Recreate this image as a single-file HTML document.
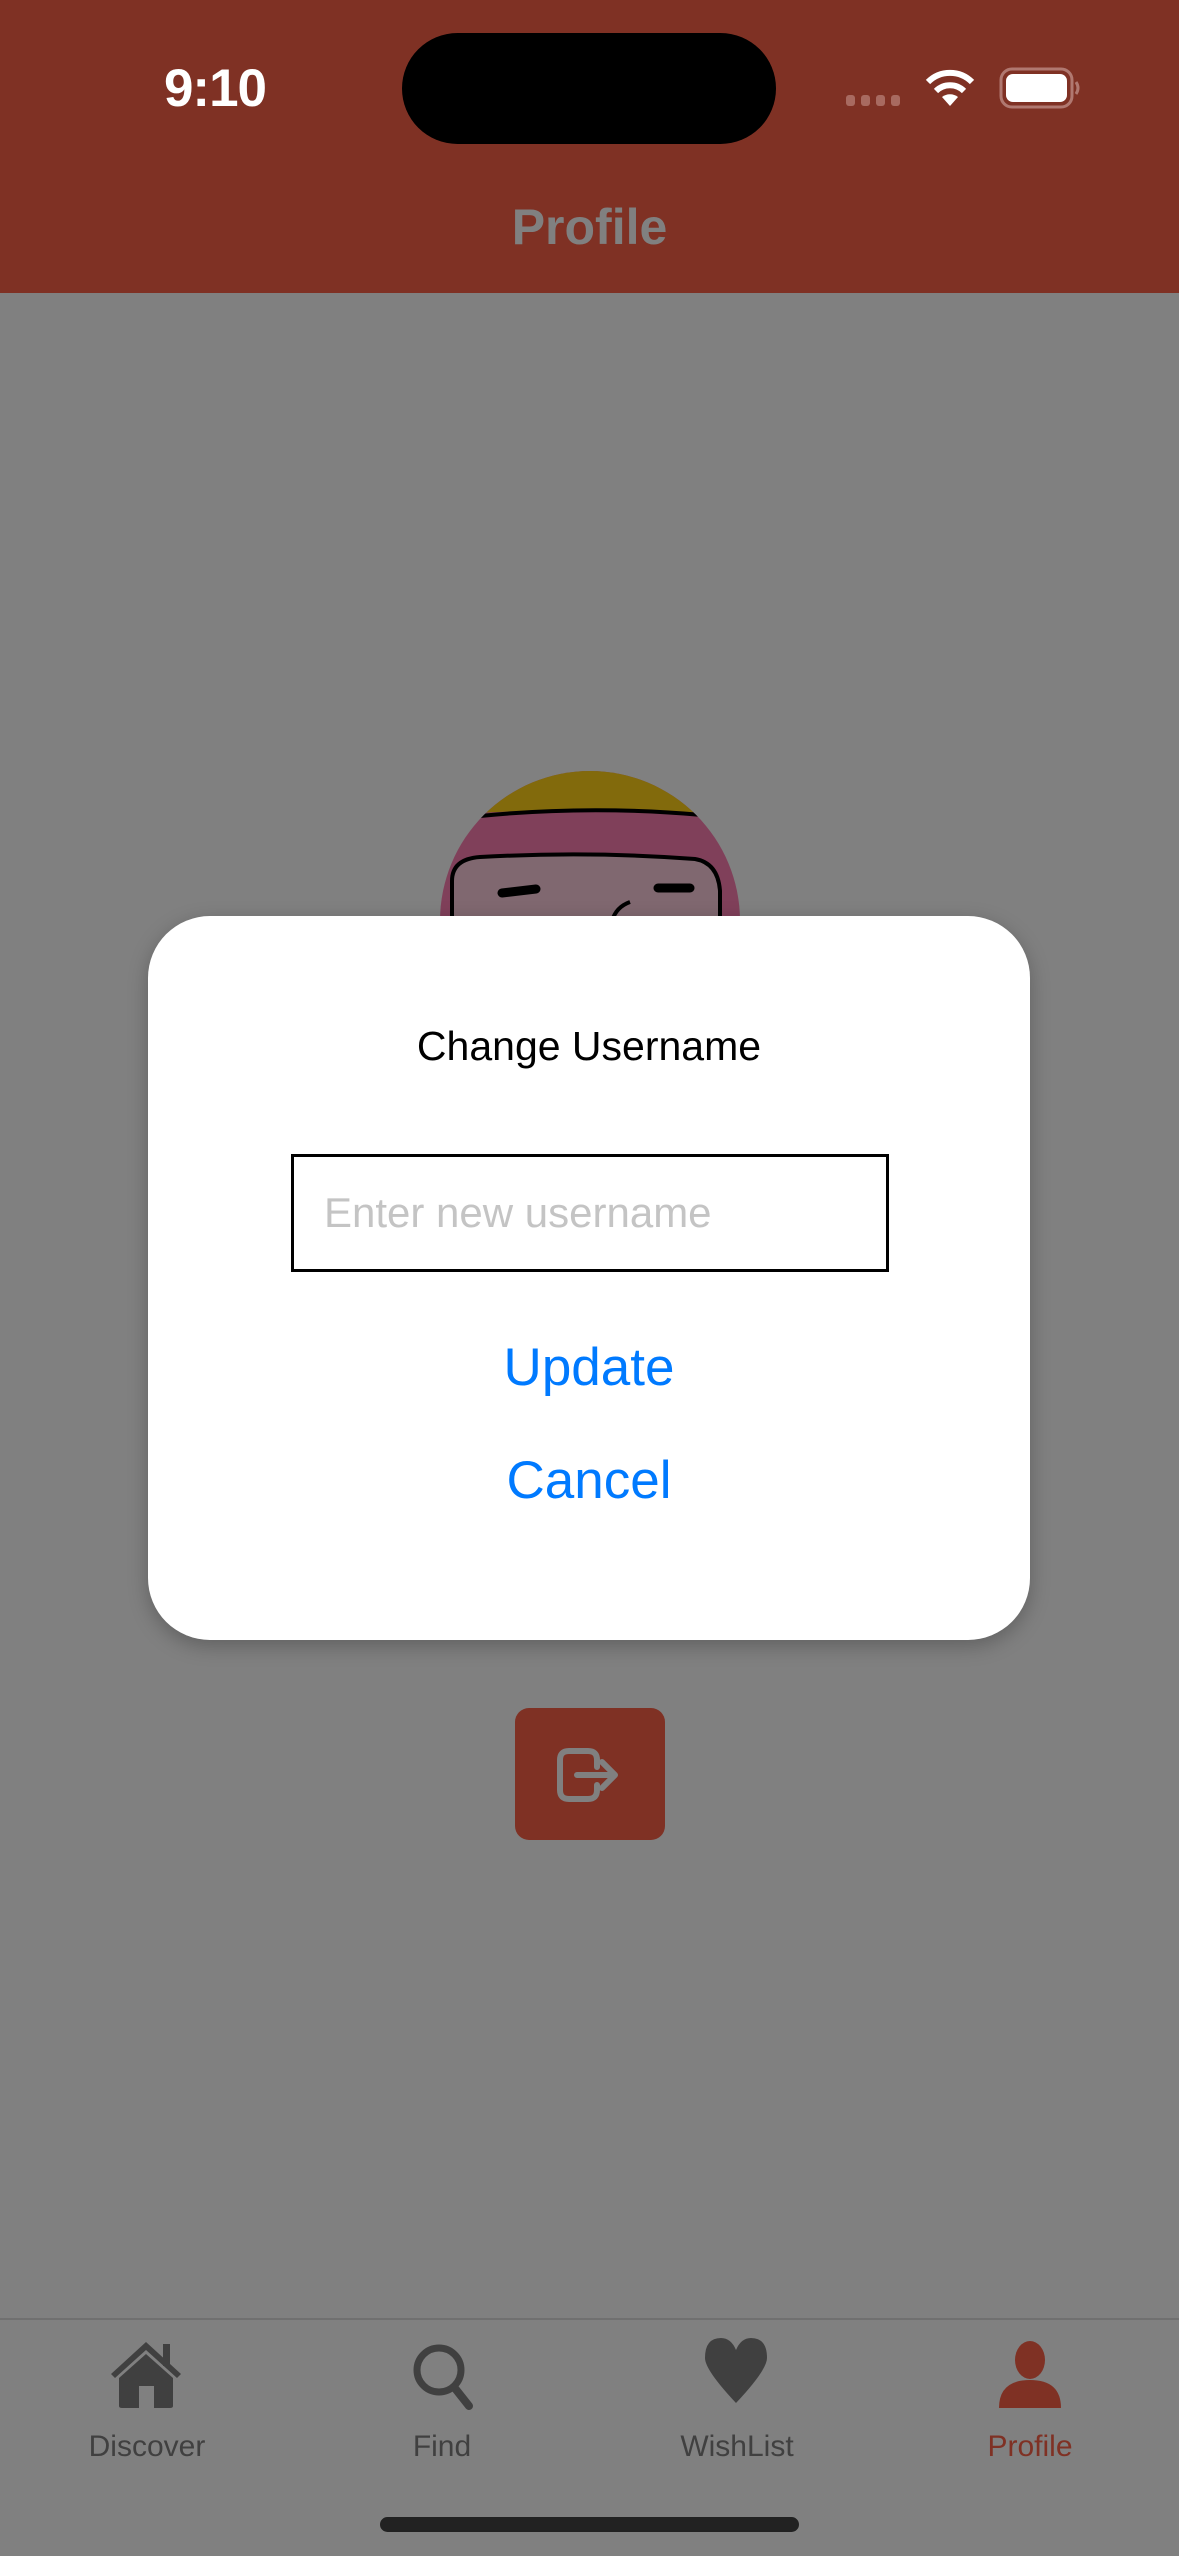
<!DOCTYPE html>
<html><head><meta charset="utf-8"><style>
*{margin:0;padding:0;box-sizing:border-box}
body{width:1179px;height:2556px;background:#808080;position:relative;overflow:hidden;font-family:"Liberation Sans",sans-serif}
.abs{position:absolute}
.hdr{left:0;top:0;width:1179px;height:293px;background:#7f3124}
.c{text-align:center;white-space:nowrap}
</style></head><body>
<div class="abs hdr"></div>
<div class="abs" style="left:140px;top:58px;width:150px;font-size:53px;font-weight:bold;color:#fff;text-align:center;letter-spacing:-1px">9:10</div>
<div class="abs" style="left:402px;top:33px;width:374px;height:111px;border-radius:56px;background:#000"></div>
<svg class="abs" style="left:840px;top:60px" width="250" height="60" viewBox="0 0 250 60">
 <g fill="#a86a60"><rect x="6" y="35" width="9" height="11" rx="3"/><rect x="21" y="35" width="9" height="11" rx="3"/><rect x="36" y="35" width="9" height="11" rx="3"/><rect x="51" y="35" width="9" height="11" rx="3"/></g>
 <path d="M110 46 L102 37 A13 13 0 0 1 118 37 Z" fill="#fff"/>
 <path d="M96 31 A20 20 0 0 1 124 31" stroke="#fff" stroke-width="6" fill="none"/>
 <path d="M88 22 A31 31 0 0 1 132 22" stroke="#fff" stroke-width="6" fill="none"/>
 <rect x="161" y="9" width="71" height="38" rx="11" fill="none" stroke="#b07870" stroke-width="3"/>
 <rect x="166" y="14" width="61" height="28" rx="7" fill="#fff"/>
 <path d="M236 22 q4 6 0 12" stroke="#b07870" stroke-width="3" fill="none"/>
</svg>
<div class="abs c" style="left:0;width:1179px;top:198px;font-size:50px;font-weight:bold;color:#808080">Profile</div>

<svg class="abs" style="left:440px;top:771px" width="300" height="150" viewBox="0 0 300 150">
 <defs><clipPath id="cp"><circle cx="150" cy="150" r="150"/></clipPath></defs>
 <g clip-path="url(#cp)">
  <rect width="300" height="150" fill="#80405a"/>
  <path d="M0 0 H300 V44 Q150 34 0 44 Z" fill="#826a0c"/>
  <path d="M40 45 Q150 34 262 44" stroke="#000" stroke-width="4" fill="none"/>
  <path d="M12 150 V110 Q12 88 40 86 Q150 80 255 88 Q278 92 280 120 V150 Z" fill="#806870" stroke="#000" stroke-width="4"/>
  <path d="M62 122 L96 118" stroke="#000" stroke-width="9" stroke-linecap="round"/>
  <path d="M218 117 L250 117" stroke="#000" stroke-width="9" stroke-linecap="round"/>
  <path d="M172 150 Q176 136 190 131" stroke="#000" stroke-width="4" fill="none"/>
 </g>
</svg>

<div class="abs" style="left:515px;top:1708px;width:150px;height:132px;border-radius:14px;background:#7f3124"></div>
<svg class="abs" style="left:515px;top:1708px" width="150" height="132" viewBox="0 0 150 132">
 <path d="M82 59 V52 Q82 43 73 43 H54 Q45 43 45 52 V82 Q45 91 54 91 H73 Q82 91 82 82 V77" stroke="#808080" stroke-width="6" fill="none" stroke-linecap="round"/>
 <path d="M62 67 H100 M87 54 L100 67 L87 80" stroke="#808080" stroke-width="6" fill="none" stroke-linecap="round" stroke-linejoin="round"/>
</svg>

<div class="abs" style="left:148px;top:916px;width:882px;height:724px;background:#fff;border-radius:62px;box-shadow:0 6px 20px rgba(0,0,0,0.25)"></div>
<div class="abs c" style="left:148px;width:882px;top:1023px;font-size:41px;color:#000">Change Username</div>
<div class="abs" style="left:291px;top:1154px;width:598px;height:118px;border:3px solid #000"></div>
<div class="abs" style="left:324px;top:1189px;font-size:42px;color:#c4c4c4">Enter new username</div>
<div class="abs c" style="left:148px;width:882px;top:1337px;font-size:53px;color:#007aff">Update</div>
<div class="abs c" style="left:148px;width:882px;top:1450px;font-size:53px;color:#007aff">Cancel</div>

<div class="abs" style="left:0;top:2318px;width:1179px;height:2px;background:#707070"></div>
<svg class="abs" style="left:0;top:2330px" width="1179" height="90" viewBox="0 0 1179 90">
 <g fill="#404040">
  <path d="M111 44 L146 12 L181 44 L177 48 L146 20 L115 48 Z"/>
  <rect x="163" y="14" width="7" height="22"/>
  <path d="M119 48 L146 24 L173 48 V76 Q173 78 170 78 H154 V56 H139 V78 H122 Q119 78 119 76 Z"/>
 </g>
 <circle cx="439" cy="40" r="22" fill="none" stroke="#404040" stroke-width="7"/>
 <path d="M454 57 L469 76" stroke="#404040" stroke-width="8" stroke-linecap="round"/>
 <path d="M736 73 Q705 40 705 28 Q705 8 721 8 Q731 8 736 20 Q741 8 751 8 Q767 8 767 28 Q767 40 736 73 Z" fill="#404040"/>
 <ellipse cx="1030" cy="30" rx="15" ry="19" fill="#7f3124"/>
 <path d="M999 78 Q999 50 1030 50 Q1061 50 1061 78 Z" fill="#7f3124"/>
</svg>
<div class="abs c" style="left:47px;width:200px;top:2430px;font-size:30px;color:#404040">Discover</div>
<div class="abs c" style="left:342px;width:200px;top:2430px;font-size:30px;color:#404040">Find</div>
<div class="abs c" style="left:637px;width:200px;top:2430px;font-size:30px;color:#404040">WishList</div>
<div class="abs c" style="left:930px;width:200px;top:2430px;font-size:30px;color:#7f3124">Profile</div>
<div class="abs" style="left:380px;top:2517px;width:419px;height:15px;border-radius:8px;background:#222"></div>
</body></html>
